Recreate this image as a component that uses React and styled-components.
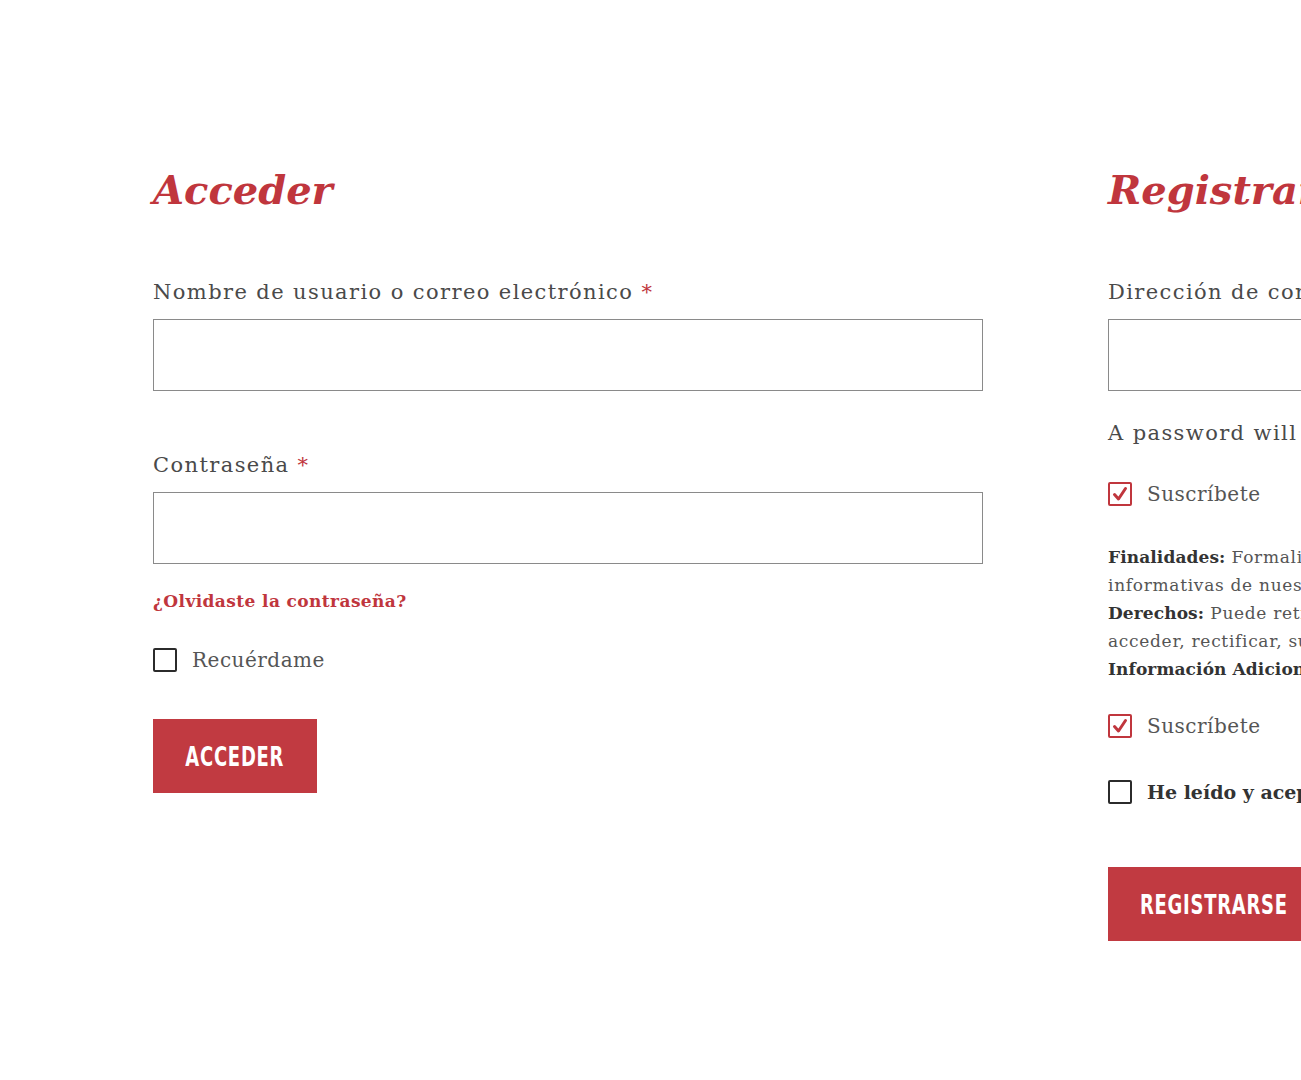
import React from "react";
import styled, { createGlobalStyle } from "styled-components";

const GlobalStyle = createGlobalStyle`
  html, body {
    margin: 0;
    padding: 0;
    background: #fff;
    overflow: hidden;
  }
  body {
    font-family: "DejaVu Serif", "Liberation Serif", serif;
  }
`;

const RED = "#c0363d";

const Page = styled.div`
  width: 1301px;
  height: 1080px;
  overflow: hidden;
  display: flex;
  gap: 125px;
  padding: 158px 0 0 153px;
  box-sizing: border-box;
`;

const Column = styled.div`
  flex: 0 0 830px;
  width: 830px;
  display: flex;
  flex-direction: column;
  align-items: flex-start;
`;

const Title = styled.h2`
  margin: 0 0 56px;
  font-size: 40px;
  line-height: 64px;
  font-weight: 700;
  font-style: italic;
  color: ${RED};
  white-space: nowrap;
`;

const Label = styled.label`
  display: block;
  font-size: 21px;
  line-height: 28px;
  letter-spacing: 1.4px;
  color: #4a4a4a;
  margin-bottom: 13px;
  white-space: nowrap;
`;

const Star = styled.span`
  color: ${RED};
`;

const Input = styled.input`
  display: block;
  width: 830px;
  height: 72px;
  box-sizing: border-box;
  border: 1px solid #8a8a8a;
  background: #fff;
  margin: 0 0 ${(p) => p.$after || 0}px;
  padding: 0 16px;
`;

const Link = styled.a`
  font-size: 17px;
  line-height: 24px;
  letter-spacing: 0.4px;
  font-weight: 700;
  color: ${RED};
  text-decoration: none;
  margin: 25px 0 34px;
`;

const CheckRow = styled.div`
  display: flex;
  align-items: center;
  gap: 15px;
  margin-bottom: ${(p) => p.$after || 0}px;
  white-space: nowrap;
`;

const Box = styled.span`
  width: 24px;
  height: 24px;
  box-sizing: border-box;
  border: ${(p) => (p.$checked ? `2px solid ${RED}` : "2px solid #2b2b2b")};
  border-radius: 2px;
  display: flex;
  align-items: center;
  justify-content: center;
  flex: 0 0 24px;
`;

const CheckText = styled.span`
  font-size: ${(p) => (p.$bold ? 19 : 20)}px;
  line-height: 26px;
  letter-spacing: ${(p) => (p.$bold ? 0 : 0.5)}px;
  color: ${(p) => (p.$bold ? "#333" : "#555")};
  font-weight: ${(p) => (p.$bold ? 700 : 400)};
`;

const Button = styled.button`
  width: ${(p) => p.$w}px;
  height: 74px;
  padding: 0;
  border: none;
  background: #c13a41;
  color: #fff;
  display: flex;
  align-items: center;
  justify-content: center;
  font-family: "DejaVu Sans Condensed", "DejaVu Sans", sans-serif;
  font-weight: 700;
  font-size: 27px;
  letter-spacing: 1px;
  text-transform: uppercase;
  white-space: nowrap;
`;

const ButtonText = styled.span`
  display: inline-block;
  transform: scaleX(0.74);
`;

const Hint = styled.p`
  margin: 28px 0 34px;
  font-size: 21px;
  line-height: 28px;
  letter-spacing: 1.4px;
  color: #4a4a4a;
  white-space: nowrap;
`;

const Legal = styled.p`
  margin: 36px 0 30px;
  font-size: 17px;
  line-height: 28px;
  letter-spacing: 0.7px;
  color: #555;
  white-space: nowrap;

  b {
    color: #333;
    letter-spacing: 0.1px;
  }
`;

const Check = () => (
  <svg width="16" height="16" viewBox="0 0 16 16">
    <path
      d="M2.5 8.5 L6.5 13 L13.5 2.5"
      fill="none"
      stroke={RED}
      strokeWidth="3"
      strokeLinecap="round"
      strokeLinejoin="round"
    />
  </svg>
);

const Checkbox = ({ checked, bold, children, after }) => (
  <CheckRow $after={after}>
    <Box $checked={checked}>{checked && <Check />}</Box>
    <CheckText $bold={bold}>{children}</CheckText>
  </CheckRow>
);

export default function App() {
  return (
    <>
      <GlobalStyle />
      <Page>
        <Column>
          <Title>Acceder</Title>
          <Label>
            Nombre de usuario o correo electrónico <Star>*</Star>
          </Label>
          <Input type="text" $after={60} />
          <Label>
            Contraseña <Star>*</Star>
          </Label>
          <Input type="password" />
          <Link href="#">¿Olvidaste la contraseña?</Link>
          <Checkbox after={46}>Recuérdame</Checkbox>
          <Button $w={164}>
            <ButtonText>Acceder</ButtonText>
          </Button>
        </Column>

        <Column>
          <Title>Registrarse</Title>
          <Label>
            Dirección de correo electrónico <Star>*</Star>
          </Label>
          <Input type="email" />
          <Hint>A password will be sent to your email address.</Hint>
          <Checkbox checked>Suscríbete</Checkbox>
          <Legal>
            <b>Finalidades:</b> Formalizar la suscripción y enviarle comunicaciones
            <br />
            informativas de nuestros servicios.
            <br />
            <b>Derechos:</b> Puede retirar su consentimiento en cualquier momento,
            <br />
            acceder, rectificar, suprimir sus datos y demás derechos.
            <br />
            <b>Información Adicional:</b> consulte nuestra política de privacidad.
          </Legal>
          <Checkbox checked after={40}>
            Suscríbete
          </Checkbox>
          <Checkbox bold after={62}>
            He leído y acepto la política de privacidad <Star>*</Star>
          </Checkbox>
          <Button $w={212}>
            <ButtonText>Registrarse</ButtonText>
          </Button>
        </Column>
      </Page>
    </>
  );
}
